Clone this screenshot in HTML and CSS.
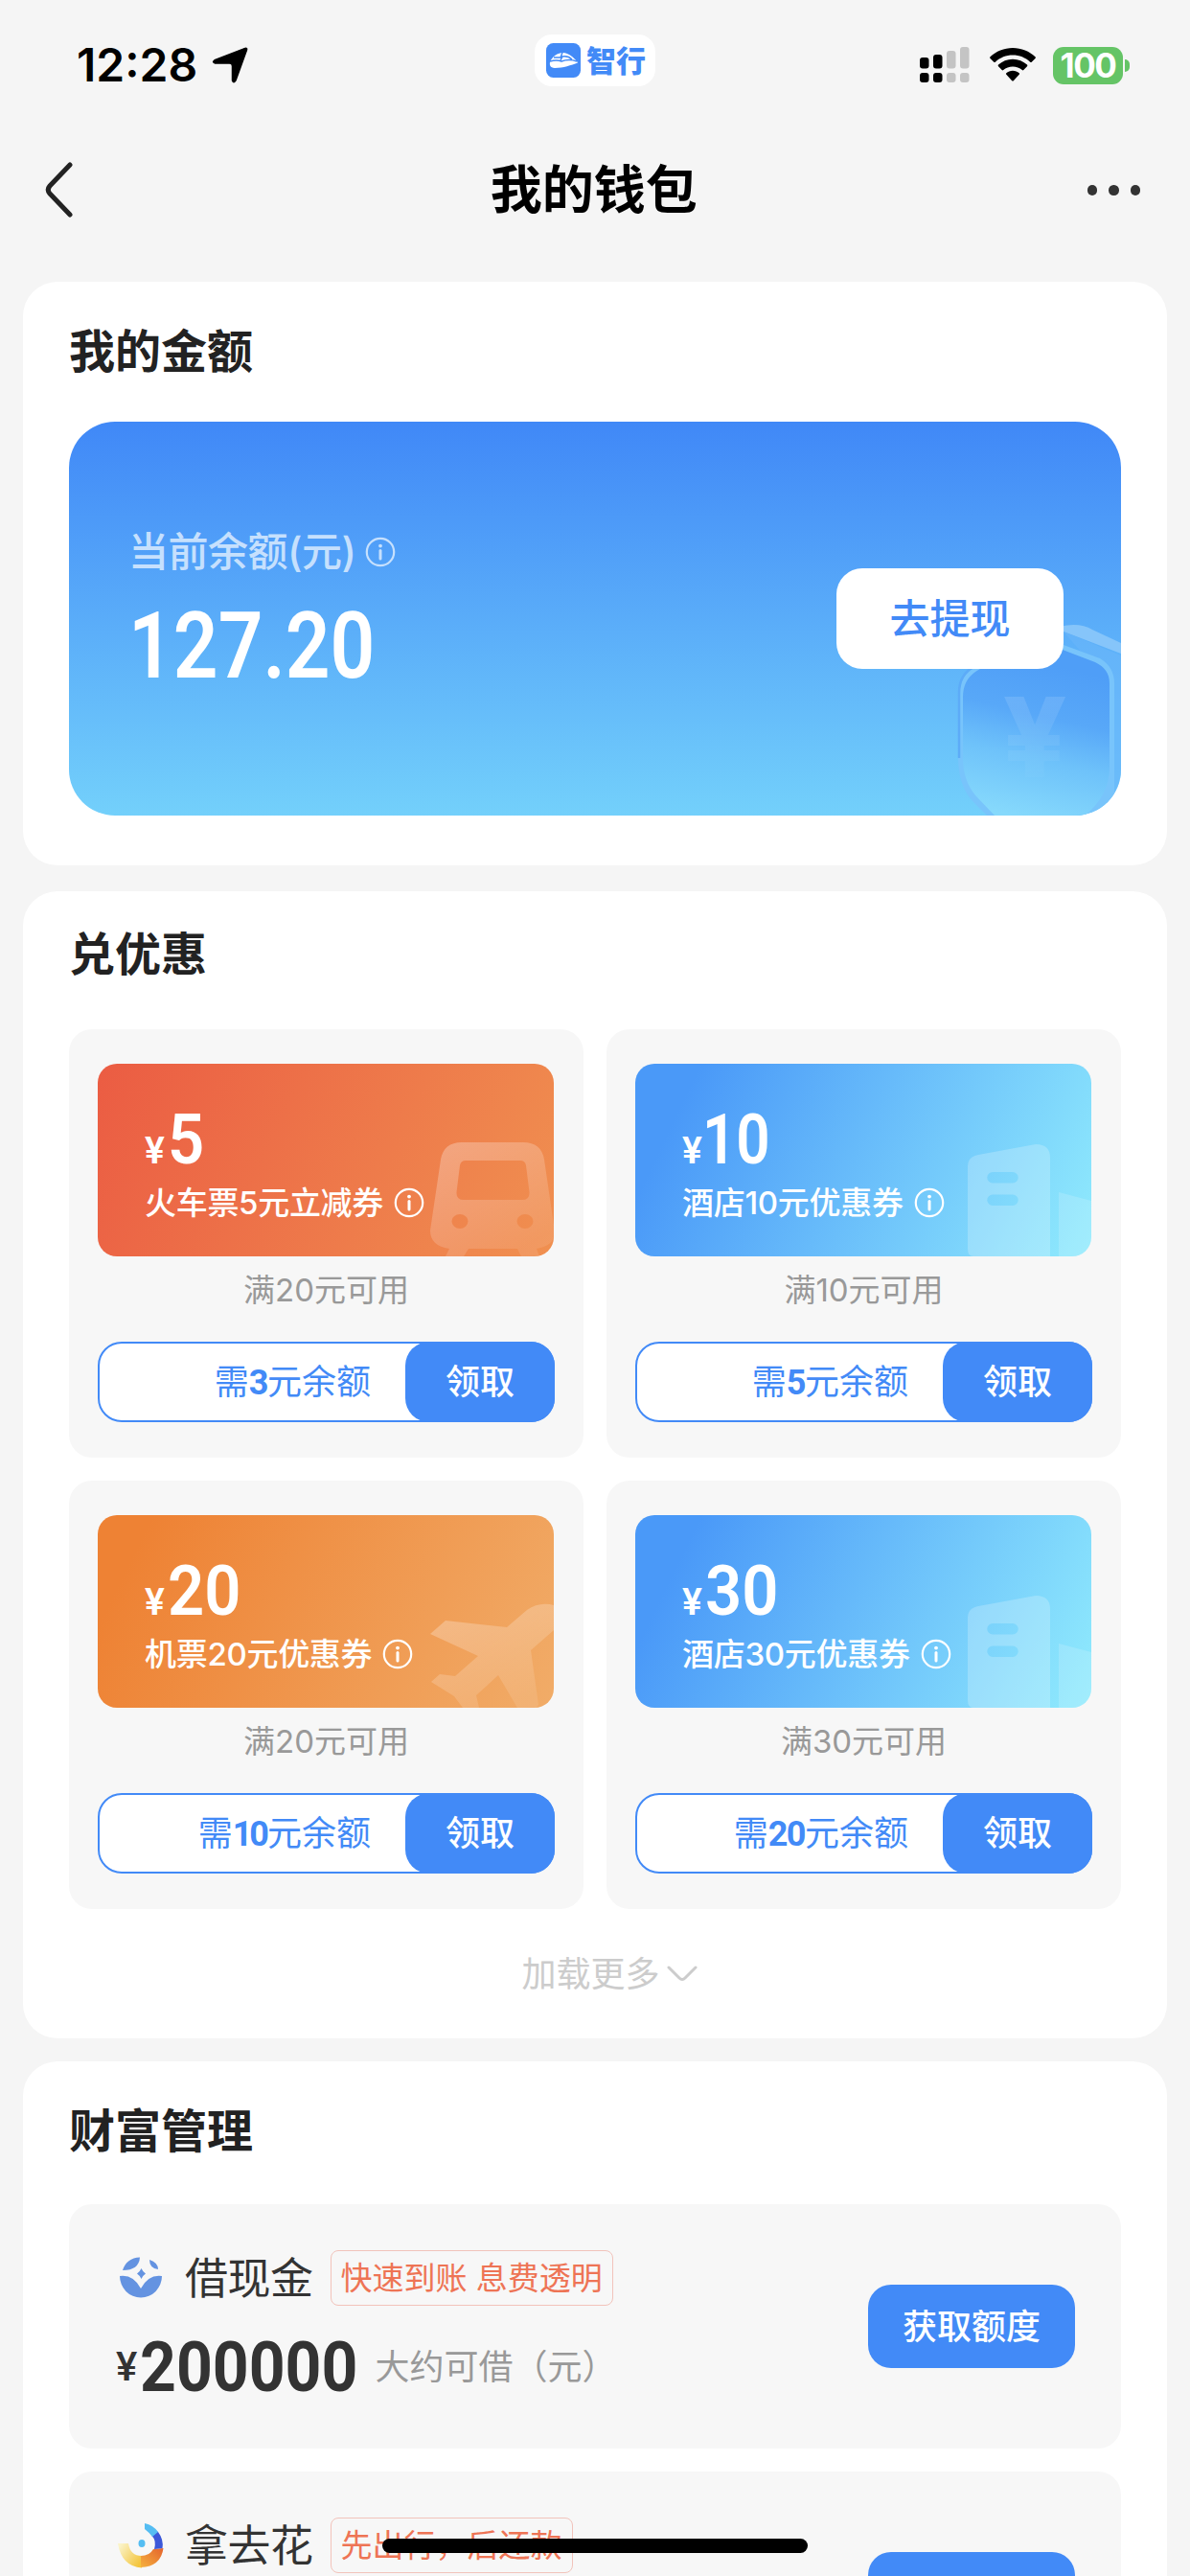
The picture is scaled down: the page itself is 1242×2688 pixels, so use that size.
FILE: index.html
```html
<!DOCTYPE html>
<html lang="zh-CN">
  <head>
    <meta charset="UTF-8" />
    <meta name="viewport" content="width=device-width, initial-scale=1.0" />
    <title>我的钱包</title>
    <link rel="stylesheet" href="styles.css">
  </head>
  <body>
    <!-- shared icons -->
    <svg class="sprite" width="0" height="0">
      <symbol id="info" viewBox="0 0 32 32">
        <circle cx="16" cy="16" r="14.2" fill="none" stroke="currentColor" stroke-width="2.2" />
        <circle cx="16" cy="9.6" r="1.9" fill="currentColor" />
        <path d="M16 14.500v8.500" stroke="currentColor" stroke-width="3" stroke-linecap="round" />
      </symbol>
      <symbol id="hotel" viewBox="0 0 476 201">
        <path fill-rule="evenodd" fill="#fff" fill-opacity=".22" d="M347 107q0-10 11-12l60-11q15 0 15 14v103h-80q-6 0-6-8zM373 113a5.700 5.700 0 0 0 0 11.400h21a5.700 5.700 0 0 0 0-11.400zM373 136.500a5.700 5.700 0 0 0 0 11.400h21a5.700 5.700 0 0 0 0-11.400z" />
        <path fill="#fff" fill-opacity=".16" d="M442 134l34 9v58h-34z" />
      </symbol>
    </svg>

    <div class="status-bar">
      <div class="status-left">
        <span class="time">12:28</span>
        <svg class="location" viewBox="0 0 38 38"><path stroke="#000" stroke-width="1.500" stroke-linejoin="round" d="M34.200 1.600Q37.500 .5 36.300 3.800L25 35Q23 38.500 21.500 35V20Q21.500 17 18.500 17H3.500Q0 16 3 13.800z" /></svg>
      </div>
      <div class="app-pill">
        <svg viewBox="0 0 36 36">
          <rect width="36" height="36" rx="7.500" fill="#428af7" />
          <path fill="#fff" d="M4 20C6 14 12 10 18 10C25 11 31 17 33 20.500C26 23 18 26 9 26C4 25.500 3.500 23 4 20z" />
          <path fill="none" stroke="#428af7" stroke-width="1.500" d="M4 19q7-2 12 0q8-3 16 0M15 18l2-4q6-1 10 3M8 15l7 0l2-5" />
        </svg>
        <span>智行</span>
      </div>
      <div class="status-right">
        <svg class="signal" viewBox="0 0 52 38">
          <g fill="#000"><rect x="0" y="11" width="9.500" height="11.500" rx="3" /><rect x="14" y="8" width="9.500" height="14.500" rx="3" /><rect x="0" y="27" width="9.500" height="10" rx="3" /><rect x="14" y="27" width="9.500" height="10" rx="3" /></g>
          <g fill="#c4c4c4"><rect x="28" y="4" width="9.500" height="18.500" rx="3" /><rect x="42" y="0" width="9.500" height="22.500" rx="3" /><rect x="28" y="27" width="9.500" height="10" rx="3" /><rect x="42" y="27" width="9.500" height="10" rx="3" /></g>
        </svg>
        <svg class="wifi" viewBox="0 0 48 36">
          <path d="M24 0C33 0 41.500 3.500 47.500 9.300q.8.800 0 1.600l-3.800 3.800q-.7.700-1.500 0C37.200 10.200 31 7.600 24 7.600S10.800 10.200 5.800 14.700q-.8.700-1.500 0L.500 10.900q-.8-.8 0-1.600C6.500 3.500 15 0 24 0z" />
          <path d="M24 11.800c5.800 0 11 2.200 15 5.800q.8.800 0 1.600l-3.700 3.900q-.7.700-1.500 0C31.100 20.900 27.800 19.500 24 19.500s-7.100 1.400-9.800 3.600q-.8.700-1.500 0L9 19.200q-.8-.8 0-1.600c4-3.600 9.200-5.800 15-5.800z" />
          <path d="M24 23.800c2.600 0 4.900.9 6.700 2.400q.8.700 0 1.500l-5.900 6.500q-.8.800-1.600 0l-5.900-6.500q-.8-.8 0-1.500c1.800-1.500 4.100-2.400 6.700-2.400z" />
        </svg>
        <div class="battery">100</div>
      </div>
    </div>

    <div class="nav-bar">
      <svg class="back" viewBox="0 0 30 58"><path d="M26 3L5 25Q1.500 29 5 33L26 55" fill="none" stroke="#222" stroke-width="5" stroke-linecap="round" /></svg>
      <h1>我的钱包</h1>
      <div class="more"><i></i><i></i><i></i></div>
    </div>

    <section class="card balance-card">
      <h2>我的金额</h2>
      <div class="balance">
        <svg class="shield" viewBox="0 0 200 200">
          <defs>
            <linearGradient id="shieldFill" x1=".6" y1="0" x2=".4" y2="1">
              <stop offset=".1" stop-color="#4f9ef7" />
              <stop offset=".4" stop-color="#58a8f8" />
              <stop offset=".65" stop-color="#6ec2fa" />
              <stop offset="1" stop-color="#86d9fc" />
            </linearGradient>
            <linearGradient id="yenFill" x1="0" y1="0" x2="0" y2="1">
              <stop offset=".2" stop-color="#fff" stop-opacity=".12" />
              <stop offset=".8" stop-color="#fff" stop-opacity=".02" />
            </linearGradient>
          </defs>
          <path d="M120 8Q152-5 170 6L200 20V31L140 8z" fill="#86c5fa" />
          <path d="M140 8L200 33V200H185V60z" fill="#68b5fa" fill-opacity=".7" />
          <path d="M62 202L45 185Q30 168 30 140V72Q31 52 48 44L110 21Q128 17 140 22L178 36Q193 45 193 62V202z" fill="#78c4fb" />
          <path d="M70 202L50 181Q35 165 35 140V76Q35 56 53 47L112 27Q128 22 139 27L173 40Q188 47 188 62V150Q188 180 160 202z" fill="url(#shieldFill)" />
          <path d="M31 140V72Q31 52 48 44" fill="none" stroke="#5cabf8" stroke-width="2.500" />
          <text x="110" y="160" text-anchor="middle" fill="url(#yenFill)">¥</text>
        </svg>
        <div class="balance-info">
          <div class="balance-label">当前余额(元)<svg class="info"><use href="#info" /></svg></div>
          <div class="balance-num"><span>127.20</span></div>
        </div>
        <div class="withdraw">去提现</div>
      </div>
    </section>

    <section class="card coupon-card">
      <h2>兑优惠</h2>
      <div class="coupons">
        <div class="coupon">
          <div class="ticket train">
            <svg class="pattern" viewBox="0 0 476 201">
              <defs><linearGradient id="fade" x1="0" y1="0" x2=".6" y2="1"><stop offset="0" stop-color="#fff" stop-opacity=".3" /><stop offset="1" stop-color="#fff" stop-opacity=".1" /></linearGradient></defs>
              <path fill="url(#fade)" fill-rule="evenodd" d="M380 82H444Q463 82 466 100L477 175Q477 190 458 193L461 201H442L438 193H387L382 201H363L367 193Q347 190 347 174L358 100Q361 82 380 82zM384 101Q379 101 378 106L374.500 134Q374 142 382 142H443Q451 142 450.500 134L447 106Q446 101 441 101zM378 157A8.500 7.500 0 1 0 378 172A8.500 7.500 0 1 0 378 157zM446 157A8.500 7.500 0 1 0 446 172A8.500 7.500 0 1 0 446 157z" />
            </svg>
            <div class="price">¥<b>5</b></div>
            <div class="name">火车票5元立减券<svg class="info"><use href="#info" /></svg></div>
          </div>
          <p class="rule">满20元可用</p>
          <div class="exchange"><span class="cost">需<b>3</b>元余额</span><span class="get">领取</span></div>
        </div>

        <div class="coupon">
          <div class="ticket hotel">
            <svg class="pattern"><use href="#hotel" /></svg>
            <div class="price">¥<b class="one">10</b></div>
            <div class="name">酒店10元优惠券<svg class="info"><use href="#info" /></svg></div>
          </div>
          <p class="rule">满10元可用</p>
          <div class="exchange"><span class="cost">需<b>5</b>元余额</span><span class="get">领取</span></div>
        </div>

        <div class="coupon">
          <div class="ticket plane">
            <svg class="pattern" viewBox="0 0 476 201">
              <path fill="url(#fade)" d="M347 124L363 110L427 117L448 99Q461 90 476 94V120L452 141L460 198L457 201H438L418 167L395 188L398 201H381L372 189L348 174L357 166L373 168L397 147z" />
            </svg>
            <div class="price">¥<b>20</b></div>
            <div class="name">机票20元优惠券<svg class="info"><use href="#info" /></svg></div>
          </div>
          <p class="rule">满20元可用</p>
          <div class="exchange"><span class="cost">需<b class="one">10</b>元余额</span><span class="get">领取</span></div>
        </div>

        <div class="coupon">
          <div class="ticket hotel">
            <svg class="pattern"><use href="#hotel" /></svg>
            <div class="price">¥<b>30</b></div>
            <div class="name">酒店30元优惠券<svg class="info"><use href="#info" /></svg></div>
          </div>
          <p class="rule">满30元可用</p>
          <div class="exchange"><span class="cost">需<b>20</b>元余额</span><span class="get">领取</span></div>
        </div>
      </div>
      <div class="load-more">加载更多<svg viewBox="0 0 32 18"><path d="M2 2L13 13Q16 16 19 13L30 2" fill="none" stroke="#ccc" stroke-width="3" stroke-linecap="round" /></svg></div>
    </section>

    <section class="card wealth-card">
      <h2>财富管理</h2>
      <div class="loan">
        <div class="loan-info">
          <div class="loan-head">
            <svg class="loan-icon" viewBox="0 0 48 48" fill="#6493e1">
              <path d="M2 22Q16 20 24 35Q32 20 46 22A22 22.500 0 0 1 2 22z" />
              <path d="M5 16Q9 3 23 2.500Q22 16 5 16z" />
              <path d="M33 5Q42 8 42 15Q33 14 33 5z" />
              <path d="M24.500 14Q26 17.500 29 19.500Q26 21.500 24.500 25Q23 21.500 20 19.500Q23 17.500 24.500 14z" />
            </svg>
            <span class="loan-name">借现金</span>
            <span class="tag">快速到账 息费透明</span>
          </div>
          <div class="loan-amount">¥<b>200000</b><span>大约可借（元）</span></div>
        </div>
        <div class="loan-btn">获取额度</div>
      </div>
      <div class="loan">
        <div class="loan-info">
          <div class="loan-head">
            <svg class="loan-icon" viewBox="0 0 48 48">
              <defs>
                <linearGradient id="gold" x1="0" y1="0" x2="1" y2=".7"><stop offset=".1" stop-color="#faf3c8" /><stop offset="1" stop-color="#f4c53d" /></linearGradient>
                <linearGradient id="flame" x1="0" y1="1" x2="1" y2="0"><stop offset="0" stop-color="#f5b13e" /><stop offset="1" stop-color="#e4632d" /></linearGradient>
              </defs>
              <path d="M0 22H11Q13 35 25 35V47.500Q4 46 0 22z" fill="url(#gold)" />
              <path d="M24 35Q33 35 37 28L47.500 27Q45 46 24 47z" fill="url(#flame)" />
              <path d="M37 9Q39 8 42 10Q48 18 46.500 27L38 28Q40.500 19 35.500 14z" fill="#3b57d8" />
              <path d="M28 1Q37 3 42 10L36 15Q32 10 28 7z" fill="#55bdf2" />
              <ellipse cx="25" cy="22" rx="3.500" ry="4" fill="#55bdf2" />
            </svg>
            <span class="loan-name">拿去花</span>
            <span class="tag">先出行，后还款</span>
          </div>
        </div>
        <div class="loan-btn"></div>
      </div>
    </section>

    <div class="home-indicator"></div>
  </body>
</html>
```

FILE: styles.css
```css
* {
  box-sizing: border-box;
}
body {
  position: relative;
  margin: 0;
  width: 1242px;
  height: 2688px;
  overflow: hidden;
  background: #f5f5f5;
  color: #222;
  font-family: Inter, "Noto Sans CJK SC", sans-serif;
  line-height: 1;
}
h1, h2, p {
  margin: 0;
}
svg {
  display: block;
  flex: none;
}
.sprite {
  position: absolute;
}

/* status bar */
.status-bar {
  display: grid;
  grid-template-columns: 1fr 126px 1fr;
  height: 136px;
  padding: 0 70px 0 80px;
  color: #000;
}
.status-left {
  display: flex;
  align-items: center;
  gap: 15px;
  height: 136px;
}
.time {
  font-size: 48px;
  font-weight: 600;
}
.location {
  width: 38px;
  height: 38px;
}
.app-pill {
  display: flex;
  align-items: center;
  gap: 6px;
  width: 126px;
  height: 54px;
  margin: 36px 0 0 -5px;
  padding-left: 12px;
  border-radius: 18px;
  background: #fff;
  color: #428af7;
  font-size: 31px;
  font-weight: 900;
}
.app-pill svg {
  width: 36px;
  height: 36px;
}
.status-right {
  display: flex;
  align-items: center;
  justify-content: flex-end;
  height: 136px;
}
.signal {
  width: 52px;
  height: 38px;
}
.wifi {
  width: 48px;
  height: 36px;
  margin: 0 18px 0 21px;
}
.battery {
  position: relative;
  width: 73px;
  height: 39px;
  border-radius: 11px;
  background: #65c466;
  color: #fff;
  font-size: 35px;
  font-weight: 700;
  letter-spacing: -1.5px;
  line-height: 39px;
  text-align: center;
}
.battery::after {
  content: "";
  position: absolute;
  right: -7px;
  top: 13px;
  width: 5px;
  height: 13px;
  border-radius: 0 5px 5px 0;
  background: #65c466;
}

/* navigation */
.nav-bar {
  display: flex;
  align-items: center;
  justify-content: space-between;
  height: 124px;
  margin-bottom: 34px;
  padding: 0 52px 0 47px;
}
.back {
  width: 30px;
  height: 58px;
}
.nav-bar h1 {
  color: #000;
  font-size: 54px;
  font-weight: 600;
  padding: 2px 0 0 28px;
}
.more {
  display: flex;
  gap: 12px;
  padding-top: 1px;
}
.more i {
  width: 10.5px;
  height: 10.5px;
  border-radius: 50%;
  background: #333;
}

/* cards */
.card {
  margin: 0 24px;
  padding: 0 48px;
  border-radius: 36px;
  background: #fff;
}
.card h2 {
  font-size: 48px;
  font-weight: 600;
}
.balance-card {
  height: 609px;
  padding-top: 49px;
}
.balance {
  position: relative;
  display: flex;
  align-items: center;
  justify-content: space-between;
  height: 411px;
  margin-top: 49px;
  padding: 0 60px 0 62px;
  border-radius: 48px;
  overflow: hidden;
  background: linear-gradient(#4088f7, #73d0fb);
}
.shield {
  position: absolute;
  right: 0;
  bottom: 0;
  width: 200px;
  height: 200px;
}
.shield text {
  font-size: 116px;
  font-weight: 800;
}
.balance-info {
  height: 300px;
  padding-top: 59px;
  color: #fff;
}
.balance-label {
  display: flex;
  align-items: center;
  gap: 10px;
  color: #c6e0fd;
  font-size: 42px;
  font-weight: 500;
  letter-spacing: -0.5px;
}
.info {
  width: 32px;
  height: 32px;
}
.balance-num {
  margin-top: 29px;
  font-family: Roboto, sans-serif;
  font-size: 97px;
  font-weight: 600;
}
.balance-num span,
.price b,
.loan-amount b {
  display: inline-block;
  transform: scaleX(0.93);
  transform-origin: left;
}
.balance-num span {
  transform: scaleX(0.845);
}
.withdraw {
  position: relative;
  width: 237px;
  height: 105px;
  border-radius: 27px;
  background: #fff;
  color: #428af7;
  font-size: 42px;
  font-weight: 500;
  line-height: 105px;
  text-align: center;
}

/* coupons */
.coupon-card {
  height: 1197px;
  margin-top: 27px;
  padding-top: 42px;
}
.coupons {
  display: grid;
  grid-template-columns: 537px 537px;
  gap: 24px;
  margin-top: 54px;
}
.coupon {
  height: 447px;
  padding: 36px 30px 0;
  border-radius: 24px;
  background: #f7f7f7;
}
.ticket {
  position: relative;
  width: 476px;
  height: 201px;
  padding: 44px 0 0 49px;
  border-radius: 20px;
  overflow: hidden;
  color: #fff;
}
.ticket.train {
  background: linear-gradient(116deg, #eb5c43, #f09050);
}
.ticket.hotel {
  background: linear-gradient(116deg, #4a99f8 12%, #90ebfd);
}
.ticket.plane {
  background: linear-gradient(116deg, #ee8234 10%, #f1ac68);
}
.pattern {
  position: absolute;
  left: 0;
  top: 0;
  width: 476px;
  height: 201px;
}
.price {
  position: relative;
  height: 72px;
  font-family: Roboto, sans-serif;
  font-size: 39px;
  font-weight: 600;
  line-height: 72px;
}
.price b {
  margin-left: 3px;
  font-size: 72px;
  font-weight: 600;
}
.price .one {
  margin-left: 0;
  transform: scaleX(0.86);
}
.name {
  position: relative;
  display: flex;
  align-items: center;
  gap: 11px;
  height: 32px;
  margin-top: 13px;
  font-size: 33px;
  font-weight: 500;
  letter-spacing: -0.3px;
}
.rule {
  margin-top: 19px;
  color: #999;
  font-size: 33px;
  text-align: center;
}
.exchange {
  display: flex;
  justify-content: flex-end;
  width: 477px;
  height: 84px;
  margin-top: 37px;
  border: 2px solid #428af7;
  border-radius: 25px;
  background: #fff;
  font-size: 36px;
  line-height: 81px;
}
.cost {
  margin-right: 38px;
  color: #428af7;
}
.cost b {
  display: inline-block;
  font-family: Roboto, sans-serif;
  letter-spacing: -1.5px;
}
.cost .one {
  letter-spacing: -3px;
  margin-right: 1px;
}
.get {
  width: 156px;
  height: 84px;
  margin: -2px;
  border-radius: 25px;
  background: #428af7;
  color: #fff;
  font-weight: 500;
  line-height: 85px;
  text-align: center;
}
.load-more {
  display: flex;
  align-items: center;
  justify-content: center;
  gap: 7px;
  margin-top: 50px;
  padding-left: 30px;
  color: #ccc;
  font-size: 36px;
}
.load-more svg {
  width: 32px;
  height: 18px;
}

/* wealth */
.wealth-card {
  height: 537px;
  margin-top: 24px;
  padding-top: 49px;
  border-radius: 36px 36px 0 0;
  overflow: hidden;
}
.wealth-card h2 {
  margin-bottom: 52px;
}
.loan {
  display: flex;
  align-items: center;
  justify-content: space-between;
  height: 255px;
  margin-bottom: 24px;
  padding: 0 48px 0 49px;
  border-radius: 24px;
  background: #f7f7f7;
}
.loan-info {
  height: 159px;
}
.loan-head {
  display: flex;
  align-items: center;
  height: 58px;
}
.loan-icon {
  width: 48px;
  height: 48px;
  margin: 0 22px 0 2px;
}
.loan-name {
  color: #333;
  font-size: 45px;
  letter-spacing: -0.5px;
}
.tag {
  height: 58px;
  margin-left: 18px;
  padding: 0 10px;
  border: 1.5px solid #f2c3bb;
  border-radius: 8px;
  color: #ee7455;
  font-size: 33px;
  line-height: 57px;
}
.loan-amount {
  display: flex;
  align-items: center;
  height: 74px;
  margin-top: 27px;
  color: #333;
  font-family: Roboto, "Noto Sans CJK SC", sans-serif;
  font-size: 42px;
  font-weight: 500;
}
.loan-amount b {
  margin: 0 -6px 0 3px;
  font-size: 73px;
  font-weight: 700;
  transform: scaleX(0.905);
}
.loan-amount span {
  color: #999;
  font-family: Inter, "Noto Sans CJK SC", sans-serif;
  font-size: 36px;
  font-weight: 400;
}
.loan-btn {
  width: 216px;
  height: 87px;
  border-radius: 24px;
  background: #428af7;
  color: #fff;
  font-size: 36px;
  font-weight: 500;
  line-height: 88px;
  text-align: center;
}
.home-indicator {
  position: absolute;
  left: 399px;
  bottom: 24px;
  width: 444px;
  height: 15px;
  border-radius: 8px;
  background: #000;
}
```
